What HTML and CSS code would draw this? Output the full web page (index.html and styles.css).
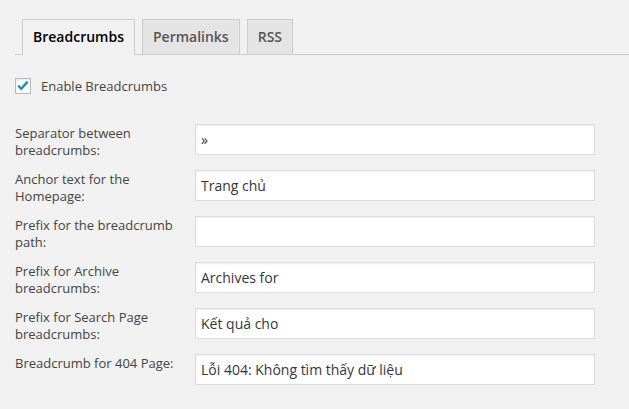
FILE: index.html
```html
<!DOCTYPE html>
<html lang="vi">
<head>
<meta charset="utf-8">
<title>Breadcrumbs</title>
<link rel="stylesheet" href="styles.css">
</head>
<body>
<div class="wrap">
  <nav class="tabs">
    <a class="tab active">Breadcrumbs</a>
    <a class="tab">Permalinks</a>
    <a class="tab">RSS</a>
  </nav>
  <label class="check-row">
    <span class="checkbox">
      <svg viewBox="0 0 16 16" width="16" height="16"><path d="M3.2 7.6 L6.3 10.8 L12.6 3.6" fill="none" stroke="#1e8cbe" stroke-width="2.4" stroke-linecap="butt" stroke-linejoin="miter"/></svg>
    </span>
    <span class="check-label">Enable Breadcrumbs</span>
  </label>
  <div class="form">
    <label class="field-label">Separator between breadcrumbs:</label>
    <input class="field" type="text" value="»">
    <label class="field-label">Anchor text for the Homepage:</label>
    <input class="field" type="text" value="Trang chủ">
    <label class="field-label">Prefix for the breadcrumb path:</label>
    <input class="field" type="text" value="">
    <label class="field-label">Prefix for Archive breadcrumbs:</label>
    <input class="field" type="text" value="Archives for">
    <label class="field-label">Prefix for Search Page breadcrumbs:</label>
    <input class="field" type="text" value="Kết quả cho">
    <label class="field-label">Breadcrumb for 404 Page:</label>
    <input class="field" type="text" value="Lỗi 404: Không tìm thấy dữ liệu">
  </div>
</div>
</body>
</html>
```
FILE: styles.css
```css
html, body {
  margin: 0;
  padding: 0;
  background: #f1f1f1;
}
body {
  font-family: "Open Sans", "Noto Sans", sans-serif;
  font-size: 13px;
  color: #444;
}
.wrap {
  padding: 19px 0 0 15px;
}
.tabs {
  display: flex;
  align-items: flex-end;
  gap: 7px;
  padding-left: 7px;
  border-bottom: 1px solid #ccc;
}
.tab {
  display: block;
  padding: 5px 10px;
  font-size: 14px;
  font-weight: 600;
  line-height: 24px;
  color: #555;
  background: #e4e4e4;
  border: 1px solid #ccc;
  border-bottom: none;
  margin-bottom: 0;
}
.tab.active {
  color: #000;
  background: #f1f1f1;
  margin-bottom: -1px;
  padding-bottom: 6px;
}
.check-row {
  display: flex;
  align-items: center;
  margin-top: 23px;
  height: 16px;
}
.checkbox {
  width: 14px;
  height: 14px;
  border: 1px solid #b4b9be;
  background: #fff;
  box-shadow: inset 0 1px 2px rgba(0,0,0,.1);
  position: relative;
  flex: none;
}
.checkbox svg {
  position: absolute;
  left: -1px;
  top: -1px;
}
.check-label {
  margin-left: 10px;
  line-height: 16px;
}
.form {
  display: grid;
  grid-template-columns: 165px 400px;
  align-items: start;
  column-gap: 15px;
  row-gap: 11px;
  margin-top: 30px;
}
.field-label {
  line-height: 17px;
  padding-top: 1px;
}
.field {
  box-sizing: border-box;
  width: 400px;
  height: 31px;
  margin: 0;
  padding: 0 5px;
  border: 1px solid #ddd;
  box-shadow: inset 0 1px 2px rgba(0,0,0,.07);
  background: #fff;
  font-family: "Open Sans", "Noto Sans", sans-serif;
  font-size: 14px;
  color: #32373c;
  outline: none;
}
```
